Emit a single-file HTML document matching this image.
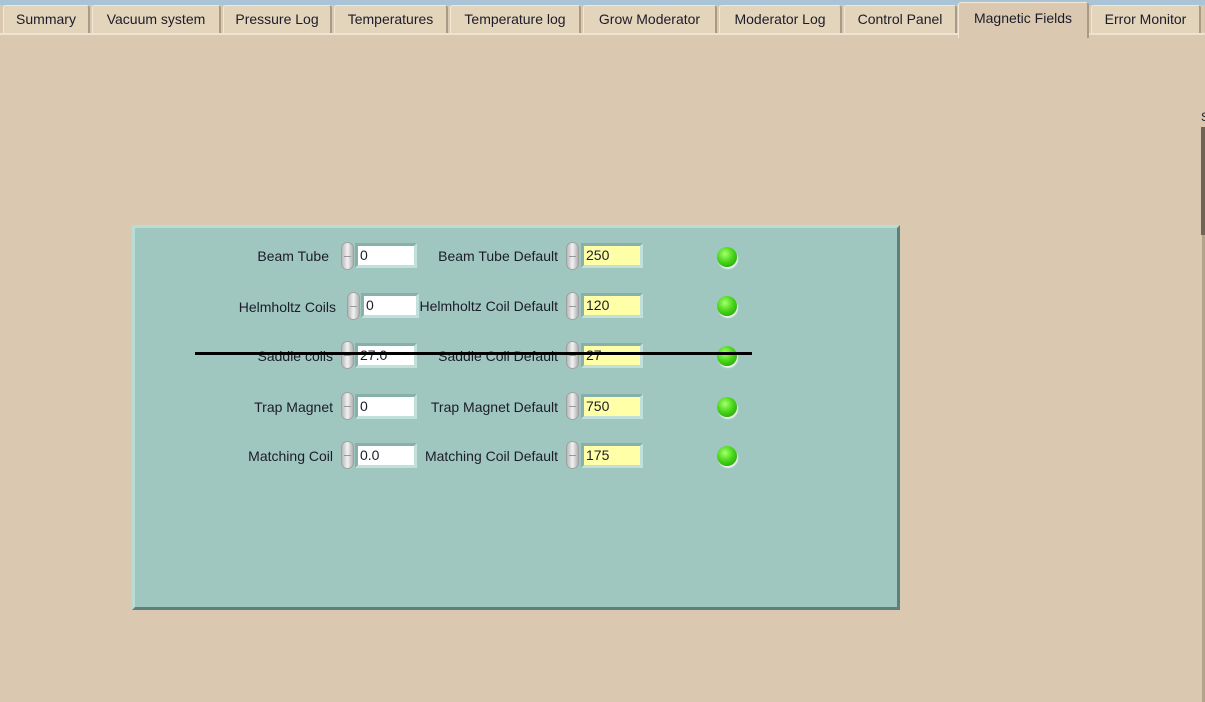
<!DOCTYPE html>
<html><head><style>
body{margin:0;width:1205px;height:702px;background:#dac9b0;position:relative;overflow:hidden;font-family:"Liberation Sans",sans-serif;font-size:14px;color:#1c1c28}
.top{position:absolute;left:0;top:0;width:1205px;height:5px;background:#a9c4d6}
.tab{position:absolute;top:5px;height:28px;background:#e3d4bc;border:1px solid #f3e8d6;border-right:2px solid #a89a84;border-bottom:none;border-radius:3px 3px 0 0;box-sizing:border-box;text-align:center;line-height:27px;font-size:14px}
.sel{top:2px;height:36px;background:#dac9b0;line-height:30px;z-index:2}
.line{position:absolute;left:0;top:33px;width:1205px;height:2px;background:#efe4d2}
.panel{position:absolute;left:132px;top:225px;width:768px;height:385px;background:#9fc7bf;box-sizing:border-box;border-top:3px solid #b8dcd6;border-left:3px solid #b8dcd6;border-right:3px solid #5e807a;border-bottom:3px solid #5e807a}
.lbl{position:absolute;text-align:right;white-space:nowrap}
.sp{position:absolute;width:13px;height:28px;border-radius:7px;background:linear-gradient(90deg,#b8b8b8,#f2f2f2,#b0b0b0);border:1px solid #a0a0a0;box-sizing:border-box}
.sp:before{content:"";position:absolute;left:2px;right:2px;top:13px;height:1px;background:#999}
.box{position:absolute;height:25px;width:62px;box-sizing:border-box;border:3px solid #88b0aa;border-right-color:#c2e0da;border-bottom-color:#c2e0da;background:#fff;padding-left:2px;line-height:19px;font-size:14px}
.y{background:#ffffa8}
.led{position:absolute;width:20px;height:20px;border-radius:50%;background:radial-gradient(circle at 40% 35%,#a8ff70,#48d818 45%,#209008);box-shadow:1px 2px 1px #e8f0ee}
.strike{position:absolute;left:195px;top:352px;width:557px;height:3px;background:#000;z-index:5}
.sb{position:absolute;left:1201px;top:127px;width:4px;height:108px;background:#6f6556}
.sb2{position:absolute;left:1202px;top:235px;width:3px;height:467px;background:#b3a48c}
</style></head><body>
<div class="top"></div>
<div class="line"></div>
<div class="tab" style="left:3px;width:87px">Summary</div>
<div class="tab" style="left:92px;width:129px">Vacuum system</div>
<div class="tab" style="left:223px;width:109px">Pressure Log</div>
<div class="tab" style="left:334px;width:114px">Temperatures</div>
<div class="tab" style="left:450px;width:131px">Temperature log</div>
<div class="tab" style="left:583px;width:134px">Grow Moderator</div>
<div class="tab" style="left:719px;width:123px">Moderator Log</div>
<div class="tab" style="left:844px;width:113px">Control Panel</div>
<div class="tab sel" style="left:958px;width:131px">Magnetic Fields</div>
<div class="tab" style="left:1091px;width:110px">Error Monitor</div>
<div style="position:absolute;left:1201px;top:110px;font-size:12px">S</div>
<div class="sb"></div>
<div class="sb2"></div>
<div class="panel"></div>

<div class="lbl" style="right:876px;top:248px">Beam Tube</div>
<div class="sp" style="left:341px;top:242px"></div>
<div class="box" style="left:355px;top:243px">0</div>
<div class="lbl" style="right:647px;top:248px">Beam Tube Default</div>
<div class="sp" style="left:566px;top:242px"></div>
<div class="box y" style="left:581px;top:243px">250</div>
<div class="led" style="left:717px;top:247px"></div>

<div class="lbl" style="right:869px;top:299px">Helmholtz Coils</div>
<div class="sp" style="left:347px;top:292px"></div>
<div class="box" style="left:361px;top:293px;width:58px">0</div>
<div class="lbl" style="right:647px;top:298px">Helmholtz Coil Default</div>
<div class="sp" style="left:566px;top:292px"></div>
<div class="box y" style="left:581px;top:293px">120</div>
<div class="led" style="left:717px;top:296px"></div>

<div class="lbl" style="right:872px;top:348px">Saddle coils</div>
<div class="sp" style="left:341px;top:341px"></div>
<div class="box" style="left:355px;top:343px">27.0</div>
<div class="lbl" style="right:647px;top:348px">Saddle Coil Default</div>
<div class="sp" style="left:566px;top:341px"></div>
<div class="box y" style="left:581px;top:343px">27</div>
<div class="led" style="left:717px;top:346px"></div>

<div class="lbl" style="right:872px;top:399px">Trap Magnet</div>
<div class="sp" style="left:341px;top:392px"></div>
<div class="box" style="left:355px;top:394px">0</div>
<div class="lbl" style="right:647px;top:399px">Trap Magnet Default</div>
<div class="sp" style="left:566px;top:392px"></div>
<div class="box y" style="left:581px;top:394px">750</div>
<div class="led" style="left:717px;top:397px"></div>

<div class="lbl" style="right:872px;top:448px">Matching Coil</div>
<div class="sp" style="left:341px;top:441px"></div>
<div class="box" style="left:355px;top:443px">0.0</div>
<div class="lbl" style="right:647px;top:448px">Matching Coil Default</div>
<div class="sp" style="left:566px;top:441px"></div>
<div class="box y" style="left:581px;top:443px">175</div>
<div class="led" style="left:717px;top:446px"></div>

<div class="strike"></div>
</body></html>
